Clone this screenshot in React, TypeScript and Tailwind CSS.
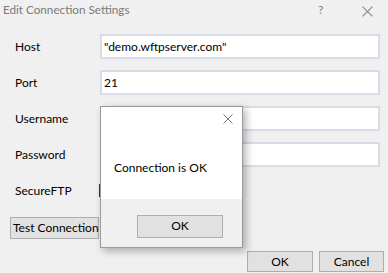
import React from "react";

const font = { fontFamily: 'Lato, "Open Sans", sans-serif' };

function Field({ label, value }: { label: string; value?: string }) {
  return (
    <div className="flex items-center h-[25px]">
      <span className="w-[100px] shrink-0 pl-[15px] text-[12px] text-black">{label}</span>
      <div className="w-[280px] h-[25px] bg-white border-2 border-[#d7dce6] flex items-center pl-[2px] text-[12px] text-black">
        {value}
      </div>
    </div>
  );
}

function XIcon({ size, color }: { size: number; color: string }) {
  return (
    <svg width={size} height={size} viewBox="0 0 10 10" className="block">
      <path d="M0.5 0.5 L9.5 9.5 M9.5 0.5 L0.5 9.5" stroke={color} strokeWidth="1" fill="none" />
    </svg>
  );
}

export default function App() {
  return (
    <div className="relative w-[388px] h-[273px] bg-[#f0f0f0] overflow-hidden" style={font}>
      {/* Title bar */}
      <div className="flex items-center h-[18px] pl-[3px] pt-[2px]">
        <span className="text-[11.7px] text-[#7a7a7a] flex-1">Edit Connection Settings</span>
        <span className="text-[12px] text-[#7a7a7a] w-[10px] mr-[34px]">?</span>
        <div className="mr-[15px] mt-[3px]">
          <XIcon size={11} color="#888" />
        </div>
      </div>

      {/* Form */}
      <div className="flex flex-col gap-[11px] mt-[16px]">
        <Field label="Host" value={'"demo.wftpserver.com"'} />
        <Field label="Port" value="21" />
        <Field label="Username" />
        <Field label="Password" />
        <div className="flex items-center h-[25px]">
          <span className="w-[99px] shrink-0 pl-[15px] text-[12px] text-black">SecureFTP</span>
          <div className="w-[13px] h-[13px] bg-white border border-[#333]" />
        </div>
      </div>

      <div className="pl-[10px] mt-[11px]">
        <button className="h-[22px] w-[89px] bg-[#e1e1e1] border border-[#adadad] text-[12px] text-black pl-[2px] text-left leading-none whitespace-nowrap">
          Test Connection
        </button>
      </div>

      <div className="flex justify-end gap-[6px] pr-[4px] mt-[12px]">
        <button className="h-[21px] w-[66px] bg-[#e1e1e1] border border-[#adadad] text-[12px] text-black">OK</button>
        <button className="h-[21px] w-[65px] bg-[#e1e1e1] border border-[#adadad] text-[12px] text-black">Cancel</button>
      </div>

      {/* Message box */}
      <div className="absolute left-[100px] top-[106px] w-[143px] h-[142px] border border-[#9a9a9a] bg-[#f0f0f0] shadow-[3px_3px_8px_rgba(0,0,0,0.3)] flex flex-col">
        <div className="relative h-[92px] bg-white">
          <div className="absolute left-[122px] top-[7px]">
            <XIcon size={10} color="#777" />
          </div>
          <span className="absolute left-[13px] top-[52px] text-[12px] text-black whitespace-nowrap">Connection is OK</span>
        </div>
        <div className="flex-1 pl-[36px] pt-[13px]">
          <button className="h-[23px] w-[86px] bg-[#e1e1e1] border border-[#adadad] text-[12px] text-black">OK</button>
        </div>
      </div>
    </div>
  );
}
